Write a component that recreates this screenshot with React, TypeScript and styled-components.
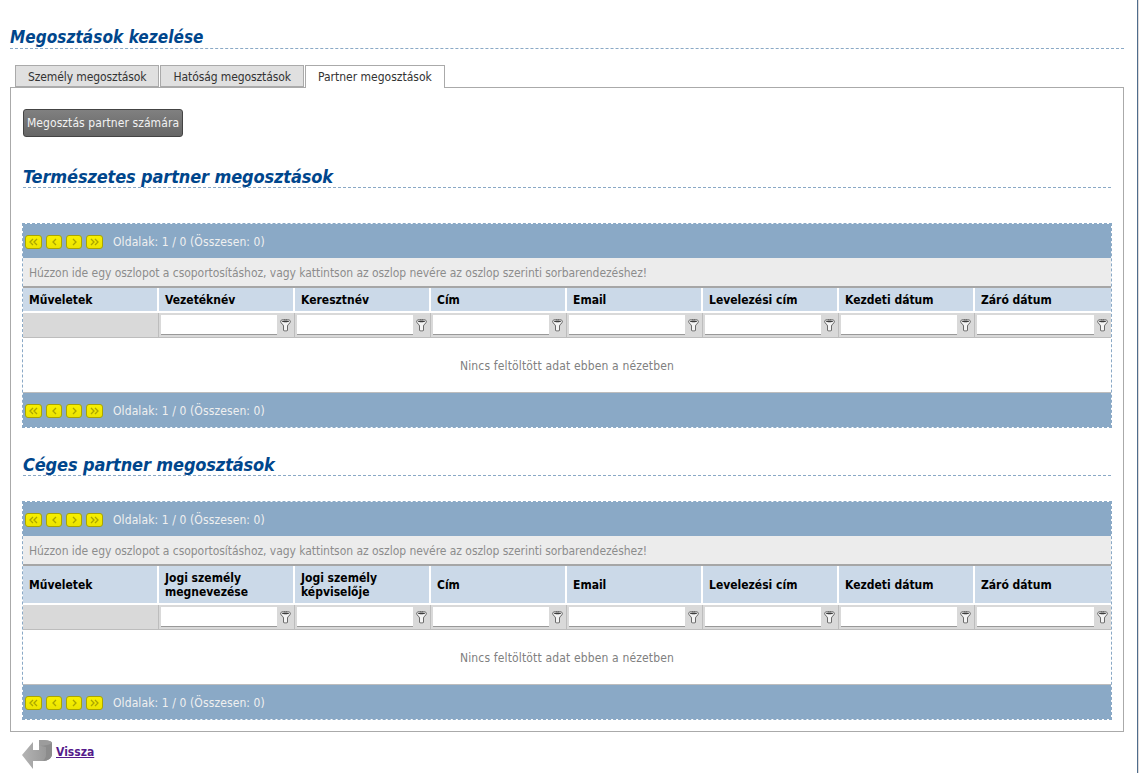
import { createGlobalStyle } from 'styled-components'
import styled from 'styled-components'

const GlobalStyle = createGlobalStyle`
  html, body {
    margin: 0;
    padding: 0;
    background: #dedada;
  }
  body {
    font-family: 'DejaVu Sans Condensed', 'DejaVu Sans', 'Liberation Sans', sans-serif;
    font-size: 12px;
    color: #333;
  }
`

const Page = styled.div`
  width: 1138px;
  height: 773px;
  box-sizing: border-box;
  padding: 27px 13px 0 10px;
  background: #fff;
  border-right: 1px solid #4f6d8c;
  overflow: hidden;
`

const Heading = styled.h1`
  margin: 0;
  height: 21px;
  border-bottom: 1px dashed #8aa9c6;
  color: #00468c;
  font-size: 17px;
  line-height: 21px;
  letter-spacing: 0.07px;
  font-weight: bold;
  font-style: italic;
`

const TabStrip = styled.div`
  display: flex;
  gap: 1px;
  margin: 16px 0 0 5px;
  height: 23px;
  position: relative;
  z-index: 1;
`

const Tab = styled.div<{ $active?: boolean }>`
  box-sizing: border-box;
  height: ${p => (p.$active ? '23px' : '22px')};
  padding: 0 12px;
  border: 1px solid #aaa;
  border-bottom: ${p => (p.$active ? 'none' : '1px solid #aaa')};
  background: ${p => (p.$active ? '#fff' : '#e0e0e0')};
  color: #333;
  font-size: 12px;
  letter-spacing: ${p => (p.$active ? '0' : '-0.1px')};
  line-height: 23px;
`

const Panel = styled.div`
  box-sizing: border-box;
  height: 645px;
  margin-top: -1px;
  padding: 21px 12px 0;
  border: 1px solid #aaa;
`

const DarkButton = styled.button`
  display: block;
  box-sizing: border-box;
  width: 160px;
  height: 28px;
  padding: 0;
  border: 1px solid #444;
  border-radius: 3px;
  background: linear-gradient(#808080, #666);
  color: #f2f2f2;
  font: inherit;
  font-size: 12px;
  letter-spacing: 0.08px;
`

const SectionTitle = styled.h2<{ $top: number }>`
  margin: ${p => p.$top}px 0 0;
  height: 23px;
  border-bottom: 1px dashed #8aa9c6;
  color: #00468c;
  font-size: 18px;
  line-height: 26px;
  letter-spacing: -0.13px;
  font-weight: bold;
  font-style: italic;
`

const GridBox = styled.div<{ $top: number }>`
  margin: ${p => p.$top}px 0 0 -1px;
  width: 1090px;
  box-sizing: border-box;
  border: 1px dashed #8aa9c6;
`

const Pager = styled.div`
  display: flex;
  align-items: center;
  box-sizing: border-box;
  height: 34px;
  padding: 2px 0 0 2px;
  background: #8aa9c6;
  color: #f0f0f0;
  font-size: 12px;
  letter-spacing: 0.1px;
`

const PagerButtons = styled.div`
  display: flex;
  gap: 4px;
  margin-right: 10px;
`

const PagerButton = styled.div<{ $wide: boolean }>`
  display: flex;
  align-items: center;
  justify-content: center;
  box-sizing: border-box;
  width: ${p => (p.$wide ? 17 : 16)}px;
  height: 14px;
  border: 1px solid #aaa500;
  border-radius: 3px;
  background: linear-gradient(#f8f000, #ece400);
`

const GroupPanel = styled.div`
  box-sizing: border-box;
  height: 30px;
  padding-left: 6px;
  background: #ececec;
  border-bottom: 2px solid #a6a6a6;
  color: #8c8c8c;
  font-size: 12px;
  letter-spacing: -0.05px;
  line-height: 30px;
`

const Row = styled.div`
  display: grid;
  grid-template-columns: repeat(8, 136px);
`

const HeadCell = styled.div<{ $h: number }>`
  box-sizing: border-box;
  display: flex;
  align-items: center;
  height: ${p => p.$h}px;
  padding: 0 4px 0 6px;
  border-right: 2px solid #fff;
  border-bottom: 2px solid #fff;
  background: #cbd9e8;
  color: #000;
  font-size: 12px;
  line-height: 14px;
  font-weight: bold;

  &:last-child {
    border-right: none;
  }
`

const FilterCell = styled.div`
  box-sizing: border-box;
  display: flex;
  align-items: center;
  height: 25px;
  padding: 0 0 0 2px;
  border-right: 1px solid #bdbdbd;
  border-bottom: 1px solid #bdbdbd;
  background: #d9d9d9;

  &:last-child {
    border-right: none;
  }
`

const FilterInput = styled.div`
  box-sizing: border-box;
  flex: 1;
  height: 20px;
  background: #fff;
  border-bottom: 1px solid #999;
`

const FilterIconWrap = styled.div`
  display: flex;
  justify-content: center;
  width: 17px;
`

const Empty = styled.div`
  height: 55px;
  background: #fff;
  border-bottom: 1px solid #bdbdbd;
  box-sizing: border-box;
  color: #808080;
  font-size: 12px;
  letter-spacing: 0.15px;
  line-height: 57px;
  text-align: center;
`

const BackRow = styled.div`
  display: flex;
  align-items: flex-start;
  gap: 4px;
  margin: 8px 0 0 12px;
`

const BackLink = styled.a`
  margin-top: 5px;
  color: #551a8b;
  font-size: 12px;
  font-weight: bold;
  text-decoration: underline;
`

const FilterIcon = () => (
  <svg width="11" height="13" viewBox="0 0 11 13">
    <path d="M.5 2.500C.5 1 2.500.5 5.500.5s5 .5 5 2c0 2-3 2.500-3 4.500v4.500c0 .5-4 .5-4 0V7c0-2-3-2.500-3-4.500z" fill="#f4f4f4" stroke="#6a6a6a" />
    <path d="M1.500 2.200C3 1.200 8 1.200 9.500 2.200 8 3.700 3 3.700 1.500 2.200z" fill="#3c3c3c" />
  </svg>
)

type Dir = 'first' | 'prev' | 'next' | 'last'

const chevrons: Record<Dir, string> = {
  first: 'M6 2L3 5L6 8M10 2L7 5L10 8',
  prev: 'M8 2L5 5L8 8',
  next: 'M5 2L8 5L5 8',
  last: 'M3 2L6 5L3 8M7 2L10 5L7 8',
}

const PagerBar = () => (
  <Pager>
    <PagerButtons>
      {(Object.keys(chevrons) as Dir[]).map(dir => (
        <PagerButton key={dir} $wide={dir === 'first' || dir === 'last'}>
          <svg width="13" height="10" viewBox="0 0 13 10">
            <path d={chevrons[dir]} fill="none" stroke="#aaa500" strokeWidth="1.300" />
          </svg>
        </PagerButton>
      ))}
    </PagerButtons>
    Oldalak: 1 / 0 (Összesen: 0)
  </Pager>
)

const DataGrid = (props: { columns: string[]; headHeight: number; top: number }) => {
  const { columns, headHeight, top } = props
  return <GridBox $top={top}>
    <PagerBar />
    <GroupPanel>Húzzon ide egy oszlopot a csoportosításhoz, vagy kattintson az oszlop nevére az oszlop szerinti sorbarendezéshez!</GroupPanel>
    <Row>
      {columns.map(c => <HeadCell key={c} $h={headHeight}><span>{c}</span></HeadCell>)}
    </Row>
    <Row>
      <FilterCell />
      {columns.slice(1).map(c => <FilterCell key={c}>
        <FilterInput />
        <FilterIconWrap><FilterIcon /></FilterIconWrap>
      </FilterCell>)}
    </Row>
    <Empty>Nincs feltöltött adat ebben a nézetben</Empty>
    <PagerBar />
  </GridBox>
}

const BackArrow = () => (
  <svg width="30" height="30" viewBox="0 0 30 30">
    <defs>
      <linearGradient id="arrowBody" x1="0" x2="1" y1="0" y2="0">
        <stop offset="0" stopColor="#b4b4b4" />
        <stop offset="1" stopColor="#929292" />
      </linearGradient>
    </defs>
    <path d="M0 15L11 2v8h6V0c6 0 13 .5 13 3v11c0 4-4 7-9 7H11v8z" fill="url(#arrowBody)" />
    <path d="M17 0c6 0 13 .5 13 3s-7 3-13 2.500z" fill="#9c9c9c" />
    <path d="M17 5.500c5 .5 9 0 13-2.500v11c0 4-4 7-9 7 2-2 3-4 3-6V7z" fill="#8c8c8c" />
  </svg>
)

export default function App() {
  return <>
    <GlobalStyle />
    <Page>
      <Heading>Megosztások kezelése</Heading>
      <TabStrip>
        <Tab>Személy megosztások</Tab>
        <Tab>Hatóság megosztások</Tab>
        <Tab $active>Partner megosztások</Tab>
      </TabStrip>
      <Panel>
        <DarkButton>Megosztás partner számára</DarkButton>
        <SectionTitle $top={27}>Természetes partner megosztások</SectionTitle>
        <DataGrid top={35} headHeight={25} columns={['Műveletek', 'Vezetéknév', 'Keresztnév', 'Cím', 'Email', 'Levelezési cím', 'Kezdeti dátum', 'Záró dátum']} />
        <SectionTitle $top={24}>Céges partner megosztások</SectionTitle>
        <DataGrid top={25} headHeight={39} columns={['Műveletek', 'Jogi személy megnevezése', 'Jogi személy képviselője', 'Cím', 'Email', 'Levelezési cím', 'Kezdeti dátum', 'Záró dátum']} />
      </Panel>
      <BackRow>
        <BackArrow />
        <BackLink href="#">Vissza</BackLink>
      </BackRow>
    </Page>
  </>
}
